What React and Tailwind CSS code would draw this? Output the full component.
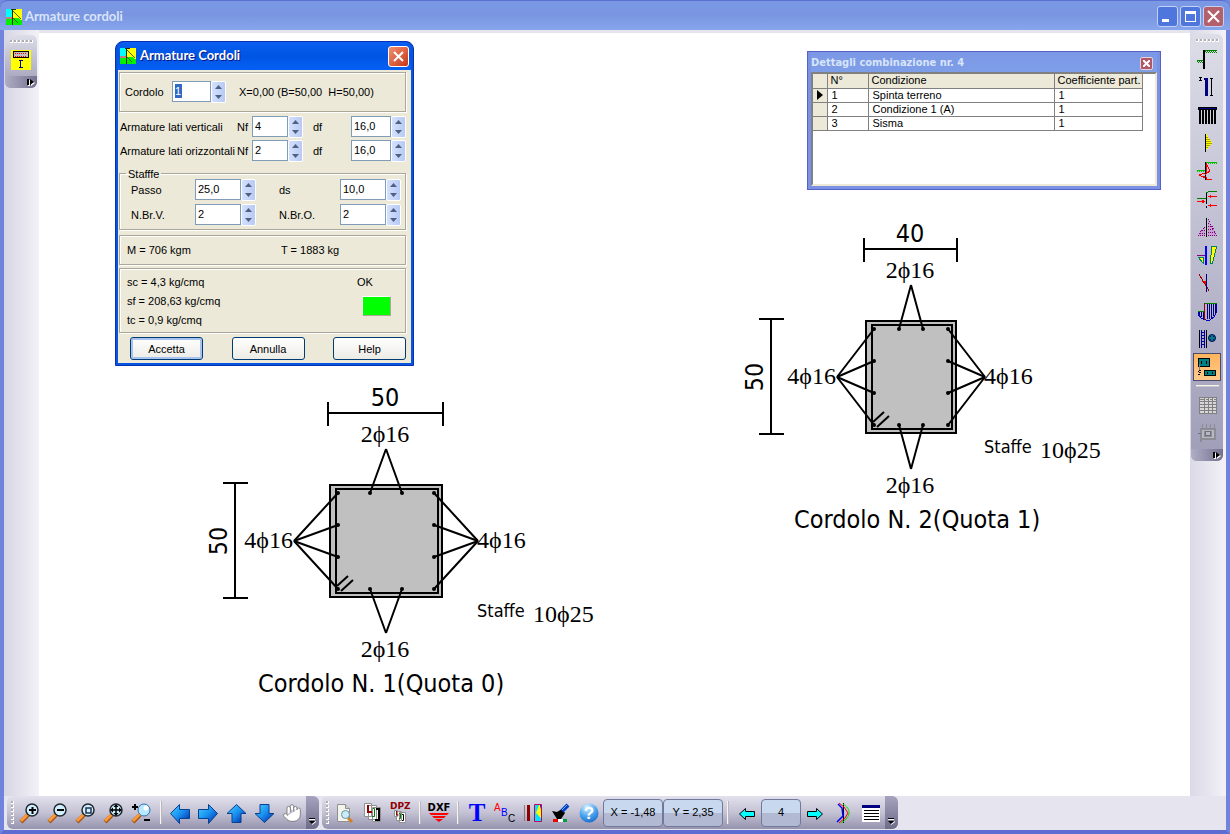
import React, { useState } from 'react';
import { Hand } from 'lucide-react';

const sections = [
    { id: 1, base: 50, height: 50, half: 56, apex: 92, title: 'Cordolo N. 1(Quota 0)', place: 'left-[147px] top-[348px]' },
    { id: 2, base: 40, height: 50, half: 45, apex: 74, title: 'Cordolo N. 2(Quota 1)', place: 'left-[672px] top-[184px]' },
];

const conditions = [
    { n: 1, name: 'Spinta terreno', coeff: 1 },
    { n: 2, name: 'Condizione 1 (A)', coeff: 1 },
    { n: 3, name: 'Sisma', coeff: 1 },
];

const AppIcon = () => (
    <svg width="16" height="16" viewBox="0 0 16 16" shapeRendering="crispEdges" className="shrink-0">
        <path fill="#00ffff" d="M0 0h6v9H0z" />
        <path fill="#ffff00" d="M7 0h9v9H7z" />
        <path fill="#00f000" d="M0 9h16v7H0z" />
        <path fill="#c08080" d="M0 8h6v2H0z" />
        <path fill="#ffff00" d="M11 8h5v3h-2z" />
        <path fill="#203000" d="M6 1h1v15H6zM5 0h5v1H5z" />
        <path stroke="#506000" d="M7 2l8 8M7 9l5 5" fill="none" />
    </svg>
);

/* ---------- side toolbar icons, 20x20 ---------- */

const Side = ({ children }) => (
    <svg width="20" height="20" viewBox="0 0 20 20" fill="none" shapeRendering="crispEdges">
        {children}
    </svg>
);

const IconSection = () => (
    <Side>
        <path fill="#ffff00" d="M0 0h20v20H0z" />
        <path fill="#c0c0c0" stroke="#000" d="M2.500 1.500h15v6h-15z" />
        <path stroke="#ff0000" strokeDasharray="1 1" d="M4 3.500h12M4 6.500h12" />
        <path stroke="#000080" d="M8 10.500h4M8 17.500h4M9.500 10v8" />
    </Side>
);

const IconPile = () => (
    <Side>
        <path stroke="#008000" strokeWidth="1" d="M8 1.500h12M0 11.500h6" />
        <path stroke="#008000" strokeDasharray="1 1" d="M8 2.500h12M9 3.500h11M0 12.500h6M1 13.500h5" />
        <path fill="#000" d="M6 1h2v19H6z" />
    </Side>
);

const IconPileLength = () => (
    <Side>
        <path fill="#000" d="M2 0h3v1H2zM2 3h3v1H2zM3 1h1v2H3zM13 1h3v1h-3zM13 18h3v1h-3zM14 2h1v16h-1z" />
        <path fill="#000080" d="M7 1h4v2H7zM8 3h3v16H8z" />
    </Side>
);

const IconPileRow = () => (
    <Side>
        <path fill="#000" d="M1 2h19v3H1zM2 5h2v14H2zM5 5h2v14H5zM8 5h2v14H8zM11 5h2v14h-2zM14 5h2v14h-2zM17 5h2v14h-2z" />
        <path fill="#000080" d="M2 3h17v1H2z" />
    </Side>
);

const IconPressure = () => (
    <Side>
        <path fill="#ffff00" d="M9 1h1v2H9zM9 3h2v1H9zM9 5h3v1H9zM9 7h5v1H9zM9 9h6v1H9zM9 11h5v1H9zM9 13h3v1H9zM9 15h2v1H9z" />
        <path fill="#a8a000" d="M9 4h2v1H9zM9 6h4v1H9zM9 8h5v1H9zM9 10h6v1H9zM9 12h4v1H9zM9 14h2v1H9z" />
        <path fill="#000" d="M8 1h1v18H8z" />
    </Side>
);

const IconDiagram = () => (
    <Side>
        <path stroke="#00c000" d="M8 1.500h12M0 9.500h8" />
        <path stroke="#00c000" strokeDasharray="1 1" d="M9 2.500h11M0 10.500h8" />
        <path fill="#000" d="M8 1h1v18H8z" />
        <path stroke="#ff0000" d="M9 2l4 8-4 3 1-9M8 12l-6 2 6 3M8 15H5M9 16l1 3 5-1" />
    </Side>
);

const IconForces = () => (
    <Side>
        <path stroke="#008000" d="M9 4l4-2h7M0 9.500h9" />
        <path fill="#000" d="M9 4h1v11H9zM9 17h1v2H9z" />
        <path stroke="#ff0000" d="M12 7.500h8M0 12.500h7M12 16.500h8" />
        <path fill="#ff0000" d="M11 7.500l3-2v4zM8 12.500l-3-2v4zM11 16.500l3-2v4z" />
    </Side>
);

const IconTriangles = () => (
    <Side>
        <path fill="#c8a0d0" d="M11 2l9 17h-9zM8 9v10H1z" />
        <path stroke="#800080" strokeDasharray="1 1" d="M11 2l9 17M8 10l-8 9M11 6.500h2M11 9.500h4M11 12.500h6M11 15.500h7M5 13.500h3M3 16.500h5M1 18.500h19" />
        <path fill="#000" d="M9 1h1v19H9z" />
    </Side>
);

const IconWedges = () => (
    <Side>
        <path fill="#ffff00" stroke="#008060" d="M1.500 12.500h5v6zM14.500 1.500h5l-4 17h-2z" />
        <path stroke="#800080" d="M0 10.500h8" />
        <path fill="#0000ff" d="M8 1h2v19H8z" />
    </Side>
);

const IconRotation = () => (
    <Side>
        <path fill="#ff0000" d="M5 8h5v6z" />
        <path stroke="#a00000" d="M2 1l10 17" />
        <path fill="#000080" d="M9 1h1v18H9z" />
    </Side>
);

const IconSlip = () => (
    <Side>
        <path stroke="#000080" d="M10.500 3v15M12.500 3v15M14.500 3v14M16.500 3v12M18.500 3v9M2.500 11v3M4.500 11v5M6.500 11v7" />
        <path stroke="#0000c0" d="M1 10v3l3 4 5 2h4l4-3 2-4V2" />
        <path stroke="#008000" d="M8 2.500h12M1 10.500h7" />
        <path fill="#a00000" d="M7 2h1v17H7z" />
    </Side>
);

const IconCage = () => (
    <Side>
        <path fill="#000" d="M2 1h1v18H2zM9 1h1v18H9z" />
        <path stroke="#0000a0" d="M4.500 1v18M7.500 1v18M4 3.500h4M4 6.500h4M4 9.500h4M4 12.500h4M4 15.500h4" />
        <circle cx="15" cy="9" r="3.500" fill="#008080" stroke="#000060" shapeRendering="auto" />
        <path fill="#000060" d="M13 7h1v1h-1zM16 7h1v1h-1zM13 10h1v1h-1zM16 10h1v1h-1z" />
    </Side>
);

const IconBeams = () => (
    <Side>
        <path fill="#008080" stroke="#000" d="M1.500 1.500h11v8h-11zM7.500 13.500h11v5h-11z" />
        <path fill="#000" d="M4 4h1v3H4zM9 4h1v3H9zM10 15h1v2h-1zM15 15h1v2h-1z" />
        <path stroke="#808080" d="M2.500 7v6" />
        <path fill="#000" d="M2 13h2v1H2zM1 14h1v1H1zM2 15h2v1H2zM1 17h2v1H1z" />
    </Side>
);

const IconGrid = () => (
    <Side>
        <path fill="#d8d6d8" d="M2 2h18v17H2z" />
        <path stroke="#808080" d="M2.500 2v17M7.500 2v17M11.500 2v17M15.500 2v17M19.500 2v17M2 2.500h18M2 6.500h18M2 9.500h18M2 12.500h18M2 15.500h18M2 18.500h18" />
        <path stroke="#808080" d="M3 4.500h4M9 4.500h2M13 4.500h2M17 4.500h2" />
    </Side>
);

const IconReport = () => (
    <Side>
        <path fill="#8c8c94" d="M3 5h16v12H5v2H3zM5 1h1v4H5zM9 1h1v4H9zM13 1h1v4h-1zM17 1h1v4h-1z" />
        <path fill="#b8b6c4" d="M5 7h12v1H5zM5 14h12v1H5zM5 8h2v6H5zM15 8h2v6h-2zM9 9h4v3H9z" />
        <path stroke="#707078" d="M8.500 8.500h5v4h-5zM1 10.500h3" />
    </Side>
);

/* ---------- bottom toolbar icons, 22x22 ---------- */

const Icon = ({ children }) => (
    <svg width="22" height="22" viewBox="0 0 22 22" fill="none" className="overflow-visible">
        {children}
    </svg>
);

const Handle = () => (
    <>
        <path stroke="#a05010" strokeWidth="4" d="M2 20l7-7" />
        <path stroke="#f89838" strokeWidth="3" d="M2 19l7-7" />
    </>
);

const Lens = ({ children }) => (
    <Icon>
        <Handle />
        <circle cx="13" cy="8" r="6" fill="#d0f0ff" stroke="#202830" strokeWidth="1.500" />
        {children}
    </Icon>
);

const ZoomIn = () => (
    <Lens><path stroke="#000" strokeWidth="2" d="M10 8h7M13.500 5v7" /></Lens>
);

const ZoomOut = () => (
    <Lens><path stroke="#000" strokeWidth="2" d="M10 8h7" /></Lens>
);

const ZoomWindow = () => (
    <Lens><path stroke="#203050" strokeWidth="1.500" d="M11 6h5v5h-5z" /></Lens>
);

const ZoomAll = () => (
    <Lens>
        <path stroke="#000" strokeWidth="1.500" d="M9 8h9M13 4v9" />
        <path fill="#000" d="M13 2l2.500 3h-5zM13 14l2.500-3h-5zM7 8l3-2.500v5zM19 8l-3-2.500v5z" />
    </Lens>
);

const ZoomDynamic = () => (
    <Icon>
        <Handle />
        <circle cx="13" cy="8" r="6" fill="#b8e8ff" stroke="#3070b0" />
        <circle cx="15" cy="6" r="2.500" fill="#fff" />
        <path stroke="#000" strokeWidth="2" d="M1 5h6M4 2v6M13 18h6" />
    </Icon>
);

const Arrow = ({ d, id }) => (
    <Icon>
        <defs>
            <linearGradient id={id} x1="0" y1="0" x2="1" y2="1">
                <stop offset="0" stopColor="#48d0ff" />
                <stop offset="0.500" stopColor="#1890f0" />
                <stop offset="1" stopColor="#0020a0" />
            </linearGradient>
        </defs>
        <path fill={`url(#${id})`} stroke="#084090" d={d} />
    </Icon>
);

const PagePreview = () => (
    <Icon>
        <path fill="#f4f4ee" stroke="#909090" d="M3.500 2.500h8l4 4v13h-12z" />
        <path fill="#d0d0c8" stroke="#909090" d="M11.500 2.500v4h4" />
        <path stroke="#d08020" strokeWidth="3" d="M14 16l4 4" />
        <circle cx="11.500" cy="12.500" r="4" fill="#c8ecf8" stroke="#7090a0" />
    </Icon>
);

const PagesIcon = () => (
    <Icon>
        <path fill="#fff" stroke="#909090" d="M10.500 5.500h8v14h-8zM6.500 3.500h8v14h-8zM2.500 1.500h7v13h-7z" />
        <path stroke="#900000" strokeWidth="2" d="M6 3v7h4" />
        <path stroke="#008000" strokeWidth="1" d="M11 6.500h1.500v8H10" />
        <path stroke="#000" strokeWidth="2" d="M14 7h3v11h-4" />
    </Icon>
);

const DpzIcon = () => (
    <Icon>
        <text x="0" y="7" fontSize="9" fontWeight="bold" fill="#900000" fontFamily="DejaVu Sans, sans-serif">DPZ</text>
        <path fill="#fff" stroke="#909090" d="M9.500 10.500h6v10h-6zM6.500 9.500h5v9h-5zM4.500 8.500h3v6h-3z" />
        <path stroke="#900000" d="M6.500 9v4h2" />
        <path stroke="#008000" d="M9 11.500h1.500v5H9" />
        <path stroke="#000" d="M12 12.500h1.500v6H12" />
    </Icon>
);

const DxfIcon = () => (
    <Icon>
        <text x="11" y="9" fontSize="10" fontWeight="bold" textAnchor="middle" fill="#000" fontFamily="DejaVu Sans, sans-serif">DXF</text>
        <path fill="#ff0000" d="M1 11h20l-2 2H3zM4 14h14l-2 2H6zM7 17h8l-4 3z" />
    </Icon>
);

const TextIcon = () => (
    <Icon>
        <text x="11" y="19" fontSize="25" fontWeight="bold" textAnchor="middle" fill="#0000ff" fontFamily="Liberation Serif, serif">T</text>
    </Icon>
);

const AbcIcon = () => (
    <Icon>
        <g fontFamily="Liberation Sans, sans-serif" fontSize="10">
            <text x="0" y="9" fill="#ff0000">A</text>
            <text x="7" y="14" fill="#0000ff">B</text>
            <text x="14" y="20" fill="#000">C</text>
        </g>
    </Icon>
);

const ColorsIcon = () => (
    <Icon>
        <path stroke="#808080" d="M2.500 3v16" />
        <path fill="#900000" d="M5 3h3v16H5z" />
        <path fill="#ffff00" stroke="#c00060" d="M12.500 2.500h7v17h-7z" />
        <path fill="#00e0ff" d="M13 3h4l-3 8 5 5v3h-6z" />
        <path fill="#0000ff" d="M18 3h1v5z" />
    </Icon>
);

const BrushIcon = () => (
    <Icon>
        <path fill="#000" d="M2 9l5 1 5-3 3 4-4 6H7z" />
        <path stroke="#0040c0" strokeWidth="4" d="M12 9l6-6" />
        <path stroke="#60b0ff" d="M12 8l5-5" />
        <path fill="#f00000" d="M3 17h5v3H3z" />
        <path fill="#fff" d="M8 17h5v3H8z" />
        <path fill="#00a040" d="M13 17h4v3h-4z" />
    </Icon>
);

const HelpIcon = () => (
    <Icon>
        <defs>
            <radialGradient id="help" cx="0.400" cy="0.200" r="0.900">
                <stop offset="0" stopColor="#e0f4ff" />
                <stop offset="0.500" stopColor="#50a8f0" />
                <stop offset="1" stopColor="#1060c8" />
            </radialGradient>
        </defs>
        <circle cx="11" cy="11" r="9.500" fill="url(#help)" />
        <text x="11" y="17" fontSize="17" fontWeight="bold" textAnchor="middle" fill="#fff" fontFamily="Liberation Sans, sans-serif">?</text>
    </Icon>
);

const PrevIcon = () => (
    <Icon><path fill="#00ffff" stroke="#000" d="M3.500 12L9.500 6.500v3h9v5h-9v3z" /></Icon>
);

const NextIcon = () => (
    <Icon><path fill="#00ffff" stroke="#000" d="M18.500 12l-6-5.500v3h-9v5h9v3z" /></Icon>
);

const CurvesIcon = () => (
    <Icon>
        <path stroke="#000" d="M11.500 1v20" />
        <path stroke="#00e000" d="M11 2c8 5 9 12-2 19" />
        <path stroke="#ff0000" d="M7 1l5 4 4 6-3 5-6 5" />
        <path stroke="#0000ff" strokeWidth="1.500" d="M6 2l4 4 1 8-6 6" />
    </Icon>
);

const ListIcon = () => (
    <Icon>
        <path fill="#fff" d="M2 3h18v17H2z" />
        <path fill="#000080" d="M2 3h18v3H2z" />
        <path stroke="#000" d="M4 8.500h15M4 11.500h15M4 14.500h15M4 17.500h15" />
    </Icon>
);

/* ---------- toolbars ---------- */

const sideTools = [
    ['Palo', IconPile],
    ['Lunghezza', IconPileLength],
    ['Palificata', IconPileRow],
    ['Pressioni', IconPressure],
    ['Diagrammi', IconDiagram],
    ['Forze', IconForces],
    ['Spinte', IconTriangles],
    ['Cunei', IconWedges],
    ['Rotazione', IconRotation],
    ['Superficie', IconSlip],
    ['Armatura pali', IconCage],
    ['Armature cordoli', IconBeams],
];

const zoomTools = [
    ['Zoom avanti', ZoomIn],
    ['Zoom indietro', ZoomOut],
    ['Zoom finestra', ZoomWindow],
    ['Zoom tutto', ZoomAll],
    ['Zoom dinamico', ZoomDynamic],
];

const arrows = [
    ['Sinistra', 'M1.500 11.500l9-9v5h10v9h-10v5z'],
    ['Destra', 'M20.500 11.500l-9-9v5h-10v9h10v5z'],
    ['Su', 'M11.500 2.500l9.500 9h-5v9H7v-9H2z'],
    ['Giu', 'M11.500 20.500l9.500-9h-5v-9H7v9H2z'],
];

const ToolButton = ({ label, active, children }) => (
    <button
        type="button"
        aria-label={label}
        className={
            active
                ? 'flex h-7 w-7 shrink-0 items-center justify-center border border-[#4b4b6f] bg-linear-to-b from-[#fdb45c] to-[#ffc98a]'
                : 'flex h-7 w-7 shrink-0 items-center justify-center'
        }
    >
        {children}
    </button>
);

const Grip = ({ vertical }) => (
    <div className={vertical ? 'ml-1 mr-[2px] flex flex-col gap-px' : 'mt-[5px] mb-[3px] flex justify-center gap-px'}>
        {[0, 1, 2, 3, 4, 5].map((i) => (
            <span key={i} className="h-[3px] w-[3px] border-r border-b border-white bg-[#b0aeb0]" />
        ))}
    </div>
);

const SideToolbar = ({ children }) => (
    <div className="flex w-8 flex-col items-center rounded-md bg-linear-to-b from-[#dddde8] to-[#a09db8]">
        <Grip />
        {children}
        <div className="mt-[2px] flex h-3 w-full items-center justify-end rounded-b-md bg-linear-to-r from-[#b0aec6] to-[#74718f] pr-[2px]">
            <svg width="8" height="7" viewBox="0 0 8 7">
                <path fill="#fff" d="M1 1h2v6H1zM4 1l4 3-4 3z" />
                <path fill="#000" d="M0 0h2v6H0zM3 0l4 3-4 3z" />
            </svg>
        </div>
    </div>
);

const BottomToolbar = ({ children }) => (
    <div className="flex h-[33px] items-center rounded-md bg-linear-to-b from-[#e2e1ec] via-[#c4c2d4] to-[#9693ae]">
        <Grip vertical />
        {children}
        <div className="flex h-full w-[13px] items-end justify-center rounded-r-md bg-linear-to-b from-[#a5a3bd] to-[#6f6c8a] pb-1">
            <svg width="7" height="7" viewBox="0 0 7 7">
                <path fill="#000" d="M0 0h6v1H0zM0 3h6L3 6z" />
                <path stroke="#fff" fill="none" d="M0 1.500h6M3 6.500l4-3" />
            </svg>
        </div>
    </div>
);

const Separator = () => <div className="mx-1 h-[23px] w-[2px] border-l border-[#f8f6e8] bg-[#b8b6c4]" />;

const Readout = ({ className, children }) => (
    <button
        type="button"
        className={`h-7 rounded border border-[#70799c] bg-linear-to-b from-[#c8d8ee] from-50% to-[#b2b9d2] to-50% text-[11px] whitespace-nowrap ${className}`}
    >
        {children}
    </button>
);

/* ---------- canvas drawings ---------- */

const Bar = ({ x, y }) => <circle cx={x} cy={y} r="2" fill="#000" stroke="none" />;

const SectionDrawing = ({ section }) => {
    const { base, height, half, apex, title, place } = section;
    const bar = half - 8;
    const rows = [-48, -16, 16, 48];
    const cols = [-Math.round(bar / 3), Math.round(bar / 3)];

    return (
        <svg className={`absolute ${place}`} width="430" height="330" viewBox="-200 -160 430 330" fill="none" stroke="#000" strokeWidth="2">
            <rect x={-half} y="-56" width={half * 2} height="112" fill="#c0c0c0" />
            <rect x={-half + 6} y="-52" width={half * 2 - 10} height="104" />

            {/* dimension lines */}
            <path d={`M${-half - 2} -128H${half + 1}M${-half - 2} -139v24M${half + 1} -139v24`} />
            <path d={`M${-half - 95} -58V57M${-half - 107} -58h25M${-half - 107} 57h25`} />

            {/* leaders */}
            {rows.map((y) => (
                <g key={y}>
                    <path d={`M${-apex} 0L${-bar} ${y}M${apex} 0L${bar} ${y}`} />
                    <Bar x={-bar} y={y} />
                    <Bar x={bar} y={y} />
                </g>
            ))}
            {cols.map((x) => (
                <g key={x}>
                    <path d={`M0 -92L${x} -48M0 92L${x} 48`} />
                    <Bar x={x} y={-48} />
                    <Bar x={x} y={48} />
                </g>
            ))}
            <path d={`M${-bar - 1} 45l11 -10M${-bar + 3} 50l12 -11`} />

            <g fill="#000" stroke="none" fontFamily="DejaVu Sans Condensed, DejaVu Sans, sans-serif" fontSize="25">
                <text x="-1" y="-135" textAnchor="middle">{base}</text>
                <text transform={`translate(${-half - 103} 0) rotate(-90)`} textAnchor="middle">{height}</text>
                <text x={-half - 72} y="151">{title}</text>
                <text x={apex - 1} y="76" fontSize="18">Staffe</text>
            </g>
            <g fill="#000" stroke="none" fontFamily="Liberation Serif, serif" fontSize="24">
                <text x="-1" y="-99" textAnchor="middle">2ϕ16</text>
                <text x="-1" y="116" textAnchor="middle">2ϕ16</text>
                <text x={-apex - 1} y="7" textAnchor="end">4ϕ16</text>
                <text x={apex - 1} y="7">4ϕ16</text>
                <text x={apex + 55} y="81">10ϕ25</text>
            </g>
        </svg>
    );
};

/* ---------- dialog ---------- */

const Chevron = ({ down }) => (
    <svg width="7" height="4" viewBox="0 0 7 4">
        <path fill="#4d6185" d={down ? 'M0 0h7L3.500 4z' : 'M0 4h7L3.500 0z'} />
    </svg>
);

const SpinButtons = ({ label }) => (
    <div className="flex w-[15px] flex-col rounded-xs border border-white bg-linear-to-r from-[#d4e0fc] to-[#b8caf4]">
        <button type="button" aria-label={`${label} su`} className="flex flex-1 items-center justify-center"><Chevron /></button>
        <button type="button" aria-label={`${label} giu`} className="flex flex-1 items-center justify-center"><Chevron down /></button>
    </div>
);

const Spin = ({ id, label, value, onChange, className }) => (
    <div className={`flex h-[22px] ${className}`}>
        <input
            id={id}
            type="text"
            aria-label={label}
            value={value}
            onChange={(e) => onChange(id, e.target.value)}
            className="h-[21px] min-w-0 flex-1 border border-[#7f9db9] bg-white px-[2px] pb-px outline-none selection:bg-[#316ac5] selection:text-white"
        />
        <SpinButtons label={label} />
    </div>
);

const panel = 'border border-[#aca899] shadow-[1px_1px_0_#fff,inset_1px_1px_0_#fff]';

const DialogButton = ({ primary, children }) => (
    <button
        type="button"
        className={`h-[23px] w-[73px] rounded-[3px] border border-[#003c74] bg-linear-to-b from-white to-[#ecebe5] pt-[2px] ${
            primary ? 'shadow-[inset_0_0_0_2px_#a9c3f0]' : ''
        }`}
    >
        {children}
    </button>
);

const CordoliDialog = () => {
    const [values, setValues] = useState({
        nfv: '4', dfv: '16,0', nfo: '2', dfo: '16,0', passo: '25,0', ds: '10,0', nbrv: '2', nbro: '2', cordolo: '1',
    });

    const update = (id, value) => setValues({ ...values, [id]: value });

    const spin = (id, label, className) => (
        <Spin id={id} label={label} value={values[id]} onChange={update} className={className} />
    );

    return (
        <div className="absolute top-2 left-[76px] w-[299px] rounded-t-lg border border-[#0831b4] bg-[#0855dd] px-[2px] pb-[2px] text-[11px]">
            <div className="flex h-7 items-center gap-1 rounded-t-lg bg-linear-to-b from-[#0a5ff0] via-[#0054e3] to-[#0660f6] pr-[2px] pl-[2px]">
                <AppIcon />
                <span className="flex-1 font-['Lato',sans-serif] text-[13px] font-bold text-white [text-shadow:1px_1px_0_#0a1883]">
                    Armature Cordoli
                </span>
                <button type="button" aria-label="Chiudi" className="flex h-[21px] w-[21px] items-center justify-center rounded-[3px] border border-white bg-linear-to-br from-[#f09070] to-[#c83010]">
                    <svg width="11" height="11" viewBox="0 0 11 11"><path stroke="#fff" strokeWidth="2" d="M1 1l9 9M10 1L1 10" /></svg>
                </button>
            </div>

            <div className="bg-[#ece9d8] pt-[2px] pr-[5px] pb-[3px] pl-px">
                <div className={`flex h-10 items-center pl-[5px] ${panel}`}>
                    <label htmlFor="cordolo" className="w-[47px]">Cordolo</label>
                    <div className="flex h-[22px] w-[54px]">
                        <div className="flex h-[21px] min-w-0 flex-1 border border-[#7f9db9] bg-white p-[2px]">
                            <input
                                id="cordolo"
                                type="text"
                                value={values.cordolo}
                                onChange={(e) => update('cordolo', e.target.value)}
                                className="h-[14px] w-[7px] bg-[#316ac5] text-white outline-none"
                            />
                        </div>
                        <SpinButtons label="Cordolo" />
                    </div>
                    <span className="ml-[13px] whitespace-pre">X=0,00 (B=50,00  H=50,00)</span>
                </div>

                <div className="mt-1 grid grid-cols-[117px_15px_61px_38px_55px] items-center gap-y-[2px] pl-px whitespace-nowrap">
                    <span>Armature lati verticali</span>
                    <label htmlFor="nfv">Nf</label>
                    {spin('nfv', 'Nf verticali', 'w-[51px]')}
                    <label htmlFor="dfv">df</label>
                    {spin('dfv', 'df verticali', 'w-[55px]')}
                    <span>Armature lati orizzontali</span>
                    <label htmlFor="nfo">Nf</label>
                    {spin('nfo', 'Nf orizzontali', 'w-[51px]')}
                    <label htmlFor="dfo">df</label>
                    {spin('dfo', 'df orizzontali', 'w-[55px]')}
                </div>

                <fieldset className={`mt-[5px] h-[63px] pl-[11px] ${panel}`}>
                    <legend className="-ml-[5px] h-[12px] px-[2px] leading-[14px]">Stafffe</legend>
                    <div className="grid grid-cols-[64px_84px_61px_61px] items-center gap-y-[3px]">
                        <label htmlFor="passo">Passo</label>
                        {spin('passo', 'Passo', 'w-[61px]')}
                        <label htmlFor="ds">ds</label>
                        {spin('ds', 'ds', 'w-[61px]')}
                        <label htmlFor="nbrv">N.Br.V.</label>
                        {spin('nbrv', 'N.Br.V.', 'w-[61px]')}
                        <label htmlFor="nbro">N.Br.O.</label>
                        {spin('nbro', 'N.Br.O.', 'w-[61px]')}
                    </div>
                </fieldset>

                <div className={`mt-[5px] grid h-[30px] grid-cols-[154px_1fr] items-center pt-px pl-[7px] ${panel}`}>
                    <span>M = 706 kgm</span>
                    <span>T = 1883 kg</span>
                </div>

                <div className={`mt-[3px] flex h-[65px] justify-between pt-1 pr-[14px] pl-[7px] leading-[19px] ${panel}`}>
                    <div>
                        <p>sc = 4,3 kg/cmq</p>
                        <p>sf = 208,63 kg/cmq</p>
                        <p>tc = 0,9 kg/cmq</p>
                    </div>
                    <div className="w-[34px]">
                        <p>OK</p>
                        <div className="mt-1 ml-[5px] h-5 w-[29px] border border-t-white border-r-[#aca899] border-b-[#aca899] border-l-white bg-[#00ff00]" />
                    </div>
                </div>

                <div className="mt-1 flex justify-between pl-[11px]">
                    <DialogButton primary>Accetta</DialogButton>
                    <DialogButton>Annulla</DialogButton>
                    <DialogButton>Help</DialogButton>
                </div>
            </div>
        </div>
    );
};

const DetailsWindow = () => (
    <div className="absolute top-[18px] right-[29px] w-[354px] border border-[#5560c8] bg-[#7b92e3] px-[3px] pb-[3px]">
        <div className="flex h-5 items-center justify-between bg-linear-to-b from-[#7b98e6] to-[#7f9ee8] pt-[2px] pr-1">
            <span className="font-['DejaVu_Sans_Condensed','DejaVu_Sans',sans-serif] text-[11px] font-bold text-[#d8e4f8]">
                Dettagli combinazione nr. 4
            </span>
            <button type="button" aria-label="Chiudi dettagli" className="flex h-[13px] w-[13px] items-center justify-center rounded-xs border border-[#e8d0d8] bg-[#b05868]">
                <svg width="7" height="7" viewBox="0 0 7 7"><path stroke="#fff" strokeWidth="2" d="M0 0l7 7M7 0L0 7" /></svg>
            </button>
        </div>
        <div className="h-[114px] border-2 border-t-[#808080] border-r-[#ece9d8] border-b-[#ece9d8] border-l-[#808080] bg-white">
            <table className="w-[330px] table-fixed border-collapse text-[11px]">
                <thead>
                    <tr className="h-[14px] bg-[#ece9d8] leading-[13px] [&>th]:border-r [&>th]:border-b [&>th]:border-[#808080] [&>th]:p-0 [&>th]:pl-[3px] [&>th]:text-left [&>th]:font-normal">
                        <th className="w-[14px]" aria-label="Riga corrente"></th>
                        <th className="w-[41px]">N°</th>
                        <th className="w-[186px]">Condizione</th>
                        <th className="whitespace-nowrap">Coefficiente part.</th>
                    </tr>
                </thead>
                <tbody>
                    {conditions.map((row, i) => (
                        <tr key={row.n} className="h-[14px] leading-[13px] [&>td]:border-r [&>td]:border-b [&>td]:border-[#808080] [&>td]:p-0 [&>td]:pl-[4px]">
                            <td className="bg-[#ece9d8]">
                                {i === 0 && (
                                    <svg width="6" height="10" viewBox="0 0 6 10"><path d="M0 0l6 5-6 5z" /></svg>
                                )}
                            </td>
                            <td>{row.n}</td>
                            <td>{row.name}</td>
                            <td>{row.coeff}</td>
                        </tr>
                    ))}
                </tbody>
            </table>
        </div>
    </div>
);

const frameButton = 'flex h-[21px] w-[21px] items-center justify-center rounded-[3px] border border-[#c4d0f4]';

const App = () => (
    <div className="flex h-screen flex-col bg-[#7488de] font-['Liberation_Sans',Arial,sans-serif] text-[11px] text-black">
        {/* Title bar */}
        <header className="flex h-[30px] shrink-0 items-center gap-[3px] rounded-t-lg border-t border-[#5a6fd0] bg-linear-to-b from-[#7a98e4] via-[#7a96e2] to-[#86a6ec] pt-[2px] pr-[6px] pl-[6px]">
            <AppIcon />
            <h1 className="flex-1 font-['Lato',sans-serif] text-[13px] font-bold text-[#d8e4f8]">Armature cordoli</h1>
            <div className="flex gap-[2px]">
                <button type="button" aria-label="Riduci" className={`${frameButton} bg-[#4f76dc]`}>
                    <svg width="13" height="13" viewBox="0 0 13 13"><path fill="#fff" d="M1 9h7v3H1z" /></svg>
                </button>
                <button type="button" aria-label="Ingrandisci" className={`${frameButton} bg-[#4f76dc]`}>
                    <svg width="13" height="13" viewBox="0 0 13 13"><path fill="#fff" fillRule="evenodd" d="M1 1h11v11H1zM2 4v7h9V4z" /></svg>
                </button>
                <button type="button" aria-label="Chiudi finestra" className={`${frameButton} bg-[#b4606c]`}>
                    <svg width="13" height="13" viewBox="0 0 13 13"><path stroke="#fff" strokeWidth="2" d="M1 1l11 11M12 1L1 12" /></svg>
                </button>
            </div>
        </header>

        <div className="flex min-h-0 flex-1 flex-col border-x-4 border-b-4 border-[#7183dc] border-b-[#5c6cd0] bg-[#e6e5ef]">
            <div className="flex min-h-0 flex-1">
                <aside className="w-[35px] shrink-0 bg-linear-to-r from-[#d6d5e4] to-[#f3f2f7] pt-[5px] pl-px">
                    <SideToolbar>
                        <ToolButton label="Sezione"><IconSection /></ToolButton>
                    </SideToolbar>
                </aside>

                <main className="relative mt-[3px] min-w-0 flex-1 overflow-hidden bg-white">
                    {sections.map((section) => (
                        <SectionDrawing key={section.id} section={section} />
                    ))}
                    <CordoliDialog />
                    <DetailsWindow />
                </main>

                <aside className="w-9 shrink-0 bg-linear-to-r from-[#dad9e6] to-[#f3f2f7] pt-1 pl-px">
                    <SideToolbar>
                        {sideTools.map(([label, Glyph]) => (
                            <ToolButton key={label} label={label} active={label === 'Armature cordoli'}>
                                <Glyph />
                            </ToolButton>
                        ))}
                        <div className="my-1 h-[2px] w-[23px] border-t border-[#f8f6e8] bg-[#c8c6cc]" />
                        <ToolButton label="Tabella"><IconGrid /></ToolButton>
                        <ToolButton label="Relazione"><IconReport /></ToolButton>
                    </SideToolbar>
                </aside>
            </div>

            {/* Bottom toolbars */}
            <footer className="flex h-[34px] shrink-0 gap-[3px] pl-[3px]">
                <BottomToolbar>
                    {zoomTools.map(([label, Glyph]) => (
                        <ToolButton key={label} label={label}><Glyph /></ToolButton>
                    ))}
                    <Separator />
                    {arrows.map(([label, d]) => (
                        <ToolButton key={label} label={label}><Arrow d={d} id={label} /></ToolButton>
                    ))}
                    <ToolButton label="Sposta">
                        <Hand size={20} fill="#fff" stroke="#707070" strokeWidth={1} />
                    </ToolButton>
                </BottomToolbar>

                <BottomToolbar>
                    <ToolButton label="Anteprima"><PagePreview /></ToolButton>
                    <ToolButton label="Pagine"><PagesIcon /></ToolButton>
                    <ToolButton label="Esporta DPZ"><DpzIcon /></ToolButton>
                    <Separator />
                    <ToolButton label="Esporta DXF"><DxfIcon /></ToolButton>
                    <Separator />
                    <ToolButton label="Testo"><TextIcon /></ToolButton>
                    <ToolButton label="Caratteri"><AbcIcon /></ToolButton>
                    <ToolButton label="Colori"><ColorsIcon /></ToolButton>
                    <ToolButton label="Pennello"><BrushIcon /></ToolButton>
                    <ToolButton label="Aiuto"><HelpIcon /></ToolButton>
                    <Readout className="w-[60px]">X = -1,48</Readout>
                    <Readout className="w-[60px]">Y = 2,35</Readout>
                    <Separator />
                    <ToolButton label="Precedente"><PrevIcon /></ToolButton>
                    <Readout className="w-10">4</Readout>
                    <ToolButton label="Successiva"><NextIcon /></ToolButton>
                    <ToolButton label="Inviluppo"><CurvesIcon /></ToolButton>
                    <ToolButton label="Elenco"><ListIcon /></ToolButton>
                </BottomToolbar>
            </footer>
        </div>
    </div>
);

export default App;
